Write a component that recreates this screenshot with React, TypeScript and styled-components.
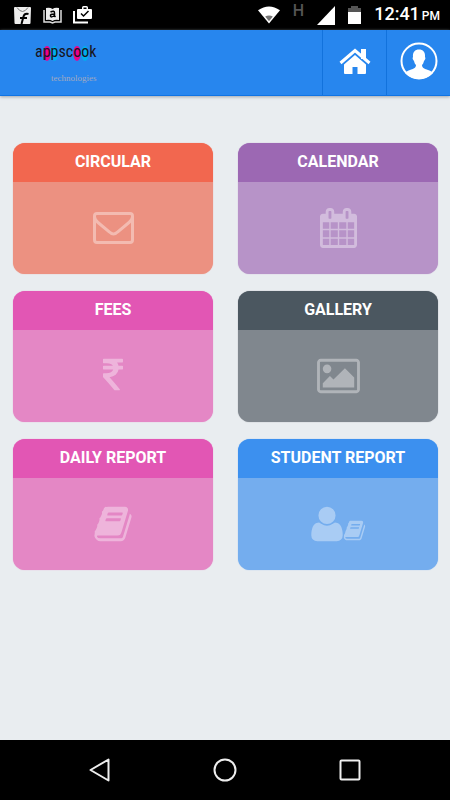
import React from 'react';
import styled, { createGlobalStyle } from 'styled-components';

const GlobalStyle = createGlobalStyle`
  * { box-sizing: border-box; }
  body { margin: 0; background: #e9edf0; font-family: Roboto, sans-serif; }
`;

const Page = styled.div`
  display: flex;
  flex-direction: column;
  min-height: 100vh;
  background: #e9edf0;
`;

const StatusBar = styled.div`
  display: flex;
  align-items: center;
  justify-content: space-between;
  height: 30px;
  padding: 0 10px 0 13px;
  background: #000;
  color: #fff;
`;

const StatusGroup = styled.div<{ $gap: number }>`
  display: flex;
  align-items: center;
  gap: ${({ $gap }) => $gap}px;
`;

const NetworkType = styled.span`
  padding-bottom: 8px;
  color: #555;
  font-size: 16px;
  font-weight: 500;
  line-height: 16px;
`;

const Clock = styled.time`
  font-size: 18px;
  font-weight: 500;
  line-height: 24px;
  white-space: nowrap;
`;

const Meridiem = styled.span`
  margin-left: 2px;
  font-size: 12px;
`;

const Header = styled.header`
  display: flex;
  justify-content: space-between;
  height: 66px;
  padding-left: 35px;
  background: #2786ee;
  border-bottom: 1px solid #0f74e4;
  box-shadow: 0 1px 3px #9da5ad;
`;

const Logo = styled.a`
  display: flex;
  flex-direction: column;
  align-items: flex-end;
  align-self: flex-start;
  padding-top: 4px;
  text-decoration: none;
`;

const Brand = styled.span`
  color: #181420;
  font-family: 'Roboto Condensed', 'Liberation Sans', sans-serif;
  font-size: 16px;
  line-height: 36px;
`;

const DotLetter = styled.span<{ $fill: string }>`
  background: radial-gradient(ellipse 4px 8px at 50% 60%, ${({ $fill }) => $fill} 85%, transparent 100%);
`;

const Tagline = styled.span`
  color: #a3a9c0;
  font-family: 'Liberation Serif', serif;
  font-size: 9px;
  line-height: 16px;
`;

const HeaderActions = styled.nav`
  display: flex;
`;

const HeaderButton = styled.button`
  display: flex;
  align-items: center;
  justify-content: center;
  width: 64px;
  padding: 0 0 3px;
  border: 0;
  border-left: 1px solid #1272dc;
  background: transparent;
  color: #fff;
  cursor: pointer;
`;

const Grid = styled.main`
  display: grid;
  grid-template-columns: 1fr 1fr;
  align-content: start;
  gap: 17px 25px;
  flex: 1;
  padding: 47px 12px 24px 13px;
`;

const Card = styled.button<{ $body: string }>`
  display: flex;
  flex-direction: column;
  padding: 0;
  overflow: hidden;
  border: 0;
  border-radius: 12px;
  background: ${({ $body }) => $body};
  box-shadow: 0 0 1px ${({ $body }) => $body};
  color: rgba(255, 255, 255, 0.38);
  font-family: inherit;
  cursor: pointer;
`;

const CardTitle = styled.span<{ $head: string }>`
  width: 100%;
  padding: 9px 4px 10px;
  background: ${({ $head }) => $head};
  color: #fff;
  font-size: 16px;
  font-weight: 700;
  line-height: 20px;
`;

const CardBody = styled.span`
  display: flex;
  align-items: center;
  justify-content: center;
  width: 100%;
  height: 92px;
`;

const StudentIcon = styled.span`
  display: flex;
  align-items: flex-end;
`;

const SmallBook = styled.span`
  display: flex;
  padding-bottom: 2px;
`;

const SystemNav = styled.nav`
  display: flex;
  align-items: center;
  justify-content: space-around;
  height: 60px;
  padding: 0 38px;
  background: #000;
`;

const SystemButton = styled.button`
  display: flex;
  align-items: center;
  justify-content: center;
  width: 40px;
  height: 40px;
  padding: 0;
  border: 0;
  background: transparent;
  cursor: pointer;
`;

const bookPath =
  'M1703 478q40 57 18 129l-275 906q-19 64-76.5 107.5t-122.5 43.5h-923q-77 0-148.5-53.5t-99.5-131.5q-24-67-2-127 0-4 3-27t4-37q1-8-3-21.5t-3-19.5q2-11 8-21t16.5-23.5 16.5-23.5q23-38 45-91.5t30-91.5q3-10 .5-30t-.5-28q3-11 17-28t17-23q21-36 42-92t25-90q1-9-2.5-32t.5-28q4-13 22-30.5t22-22.5q19-26 42.5-84.5t27.5-96.5q1-8-3-25.5t-2-26.5q2-8 9-18t18-23 17-21q8-12 16.5-30.5t15-35 16-36 19.5-32 26.5-23.5 36-11.5 47.5 5.5l-1 3q38-9 51-9h761q74 0 114 56t18 130l-274 906q-36 119-71.5 153.5t-128.5 34.5h-869q-27 0-38 15-11 16-1 43 24 70 144 70h923q29 0 56-15.5t35-41.5l300-987q7-22 5-57 38 15 59 43zm-1064 2q-4 13 2 22.5t20 9.5h608q13 0 25.5-9.5t16.5-22.5l21-64q4-13-2-22.5t-20-9.5h-608q-13 0-25.5 9.5t-16.5 22.5zm-83 256q-4 13 2 22.5t20 9.5h608q13 0 25.5-9.5t16.5-22.5l21-64q4-13-2-22.5t-20-9.5h-608q-13 0-25.5 9.5t-16.5 22.5z';

const EnvelopeIcon = () => (
  <svg width="41" height="32" viewBox="0 0 41 32" fill="none" stroke="currentColor" strokeWidth="3">
    <path d="M4 1.5H37Q39.500 1.500 39.500 4V28Q39.500 30.500 37 30.500H4Q1.500 30.500 1.500 28V4Q1.500 1.500 4 1.500ZM1.500 5Q2 8 5 10.500L16.500 20Q20.500 24 24.500 20L36 10.500Q39 8 39.500 5" />
  </svg>
);

const CalendarIcon = () => (
  <svg width="37" height="40" viewBox="64 0 1664 1792" fill="currentColor">
    <path d="M192 1664h288v-288h-288v288zm352 0h320v-288h-320v288zm-352-352h288v-320h-288v320zm352 0h320v-320h-320v320zm-352-384h288v-288h-288v288zm736 736h320v-288h-320v288zm-384-736h320v-288h-320v288zm768 736h288v-288h-288v288zm-384-352h320v-320h-320v320zm-352-864v-288q0-13-9.500-22.500t-22.500-9.500h-64q-13 0-22.500 9.500t-9.500 22.500v288q0 13 9.500 22.500t22.500 9.500h64q13 0 22.500-9.500t9.500-22.500zm736 864h288v-320h-288v320zm-384-384h320v-288h-320v288zm384 0h288v-288h-288v288zm32-480v-288q0-13-9.500-22.500t-22.500-9.500h-64q-13 0-22.500 9.500t-9.500 22.500v288q0 13 9.500 22.500t22.500 9.500h64q13 0 22.500-9.500t9.500-22.500zm384-64v1280q0 52-38 90t-90 38h-1408q-52 0-90-38t-38-90v-1280q0-52 38-90t90-38h128v-96q0-66 47-113t113-47h64q66 0 113 47t47 113v96h384v-96q0-66 47-113t113-47h64q66 0 113 47t47 113v96h128q52 0 90 38t38 90z" />
  </svg>
);

const RupeeIcon = () => (
  <svg width="40" height="40" viewBox="0 0 1792 1792" fill="currentColor">
    <path d="M1345 470v102q0 14-9 23t-23 9h-168q-23 144-129 234t-276 110q167 178 459 536 14 16 4 34-8 18-29 18h-195q-16 0-25-12-306-367-498-571-9-9-9-22v-127q0-13 9.500-22.500t22.500-9.500h112q132 0 212.500-43t102.500-125h-427q-14 0-23-9t-9-23v-102q0-14 9-23t23-9h413q-57-113-268-113h-145q-13 0-22.500-9.500t-9.500-22.500v-133q0-14 9-23t23-9h832q14 0 23 9t9 23v102q0 14-9 23t-23 9h-233q47 61 64 144h171q14 0 23 9t9 23z" />
  </svg>
);

const PictureIcon = () => (
  <svg width="43" height="40" viewBox="-64 0 1920 1792" fill="currentColor">
    <path d="M576 576q0 80-56 136t-136 56-136-56-56-136 56-136 136-56 136 56 56 136zm1024 384v448h-1408v-192l320-320 160 160 512-512zm96-704h-1600q-13 0-22.500 9.500t-9.500 22.500v1216q0 13 9.500 22.500t22.500 9.500h1600q13 0 22.500-9.500t9.500-22.500v-1216q0-13-9.500-22.500t-22.500-9.500zm160 32v1216q0 66-47 113t-113 47h-1600q-66 0-113-47t-47-113v-1216q0-66 47-113t113-47h1600q66 0 113 47t47 113z" />
  </svg>
);

const BookIcon = ({ size }: { size: number }) => (
  <svg width={size} height={size} viewBox="0 0 1792 1792" fill="currentColor">
    <path d={bookPath} />
  </svg>
);

const StudentReportIcon = () => (
  <StudentIcon>
    <svg width="32" height="40" viewBox="192 0 1408 1792" fill="currentColor">
      <path d="M1600 1405q0 120-73 189.500t-194 69.500h-874q-121 0-194-69.500t-73-189.500q0-53 3.500-103.500t14-109 26.500-108.500 43-97.500 62-81 85.500-53.500 111.500-20q9 0 42 21.500t74.500 48 108 48 133.500 21.500 133.500-21.500 108-48 74.500-48 42-21.500q61 0 111.500 20t85.500 53.500 62 81 43 97.500 26.500 108.500 14 109 3.500 103.500zm-320-893q0 159-112.500 271.500t-271.500 112.500-271.500-112.500-112.500-271.500 112.500-271.500 271.500-112.500 271.500 112.500 112.500 271.500z" />
    </svg>
    <SmallBook>
      <BookIcon size={23} />
    </SmallBook>
  </StudentIcon>
);

const cards = [
  { title: 'CIRCULAR', head: '#f2674f', body: '#ec9181', icon: <EnvelopeIcon /> },
  { title: 'CALENDAR', head: '#9c68b3', body: '#b793c8', icon: <CalendarIcon /> },
  { title: 'FEES', head: '#e256b4', body: '#e487c5', icon: <RupeeIcon /> },
  { title: 'GALLERY', head: '#4b5760', body: '#80878e', icon: <PictureIcon /> },
  { title: 'DAILY REPORT', head: '#e256b4', body: '#e487c5', icon: <BookIcon size={40} /> },
  { title: 'STUDENT REPORT', head: '#3c90ef', body: '#74adee', icon: <StudentReportIcon /> },
];

export default function App() {
  return (
    <Page>
      <GlobalStyle />
      <StatusBar>
        <StatusGroup $gap={11}>
          <svg width="19" height="19" viewBox="0 0 19 19">
            <path d="M1 2q0-1 1-1h15q1 0 1 1l-.5 15q0 1-1 1h-14q-1 0-1-1z" fill="#eee" />
            <path d="M4 1.500q5.500 8 11 0" fill="none" stroke="#777" />
            <path d="M15.500 8q-4-1-5 2.500L8.500 18M7 12h7" fill="none" stroke="#000" strokeWidth="2" />
          </svg>
          <svg width="19" height="17" viewBox="0 0 19 17" fill="none">
            <path d="M3 1Q7 0 9.500 2Q12 0 16 1v12q-4-1-6.500 1Q7 12 3 13z" fill="#eee" />
            <path d="M1 3v12h6l2.500 1 2.500-1h6V3" stroke="#ddd" strokeWidth="1.500" />
            <path d="M7.500 5q4-2 4 1v3l1 1M11 7q-4 0-3.500 2t4-.5" stroke="#000" strokeWidth="1.500" />
          </svg>
          <svg width="20" height="18" viewBox="0 0 20 18">
            <path d="M1 5v11.500h14" fill="none" stroke="#fff" strokeWidth="2" />
            <path d="M5 3h4V1.500Q9 0 10.500 0h3Q15 0 15 1.500V3h3q1 0 1 1v8q0 1-1 1H5q-1 0-1-1V4q0-1 1-1zM10.500 1.500V3h3V1.500z" fill="#fff" fillRule="evenodd" />
            <path d="m8 7.500 2.500 2.500 5-5" fill="none" stroke="#000" strokeWidth="1.500" />
          </svg>
        </StatusGroup>
        <StatusGroup $gap={13}>
          <svg width="22" height="18" viewBox="0 0 23 18">
            <path d="M0 4Q11.500-4 23 4L11.500 18z" fill="#fff" />
            <path d="M7.500 10.500q4-2 8 0l-4 5z" fill="#777" />
          </svg>
          <NetworkType>H</NetworkType>
          <svg width="18" height="19" viewBox="0 0 18 19">
            <path d="M18 0v19H0z" fill="#fff" />
          </svg>
          <svg width="13" height="18" viewBox="0 0 13 18">
            <path d="M0 2h3V0h7v2h3v4H0z" fill="#555" />
            <path d="M0 6h13v12H0z" fill="#fff" />
          </svg>
          <Clock>
            12:41<Meridiem>PM</Meridiem>
          </Clock>
        </StatusGroup>
      </StatusBar>

      <Header>
        <Logo href="#">
          <Brand>
            a<DotLetter $fill="#ed008c">p</DotLetter>
            <DotLetter $fill="#00aeef">p</DotLetter>sc<DotLetter $fill="#ed008c">o</DotLetter>
            <DotLetter $fill="#00aeef">o</DotLetter>k
          </Brand>
          <Tagline>technologies</Tagline>
        </Logo>
        <HeaderActions>
          <HeaderButton aria-label="Home">
            <svg width="32" height="27" viewBox="0 0 32 27">
              <path d="M22 1h5v10h-5z" fill="#fff" />
              <path d="M1.500 15 16 2.500 30.500 15" fill="none" stroke="#fff" strokeWidth="3" />
              <path d="M16 7 27 16.500V25q0 1-1 1h-7.500v-7h-5v7H6q-1 0-1-1v-8.500z" fill="#fff" />
            </svg>
          </HeaderButton>
          <HeaderButton aria-label="Profile">
            <svg width="38" height="38" viewBox="0 0 38 38">
              <circle cx="19" cy="19" r="17.500" fill="none" stroke="#fff" strokeWidth="2" />
              <path d="M19 7.500c4 0 6.500 2.500 6 7.500 1 1 0 3-1 4-.5 2-1 3-2 4 0 3 3 4 6 5 2 .6 4 1.500 5 3Q27 37 19 37T5 31c1-1.500 3-2.400 5-3 3-1 6-2 6-5-1-1-1.500-2-2-4-1-1-2-3-1-4-.5-5 2-7.500 6-7.500z" fill="#fff" />
            </svg>
          </HeaderButton>
        </HeaderActions>
      </Header>

      <Grid>
        {cards.map(({ title, head, body, icon }) => (
          <Card key={title} $body={body}>
            <CardTitle $head={head}>{title}</CardTitle>
            <CardBody>{icon}</CardBody>
          </Card>
        ))}
      </Grid>

      <SystemNav>
        <SystemButton aria-label="Back">
          <svg width="24" height="24" viewBox="0 0 24 24" fill="none" stroke="#eee" strokeWidth="2" strokeLinejoin="round">
            <path d="M20.500 1.500v21L2.500 12z" />
          </svg>
        </SystemButton>
        <SystemButton aria-label="Home screen">
          <svg width="24" height="24" viewBox="0 0 24 24" fill="none" stroke="#eee" strokeWidth="2">
            <circle cx="12" cy="12" r="10.500" />
          </svg>
        </SystemButton>
        <SystemButton aria-label="Recent apps">
          <svg width="22" height="22" viewBox="0 0 22 22" fill="none" stroke="#eee" strokeWidth="2">
            <rect x="1.500" y="1.500" width="19" height="19" rx="1" />
          </svg>
        </SystemButton>
      </SystemNav>
    </Page>
  );
}
